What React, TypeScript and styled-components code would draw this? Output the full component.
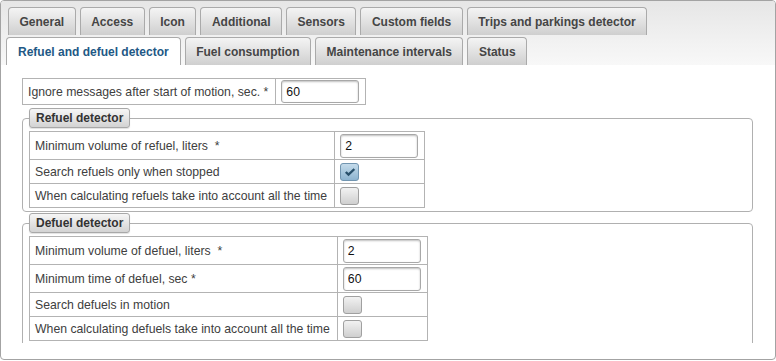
import React, { ReactElement } from "react";
import styled, { createGlobalStyle, css } from "styled-components";

const GlobalStyle = createGlobalStyle`
  html, body {
    margin: 0;
    padding: 0;
    background: #fff;
  }
  body {
    font-family: "Liberation Sans", Arial, sans-serif;
  }
`;

const Panel = styled.div`
  width: 776px;
  height: 360px;
  box-sizing: border-box;
  border: 1px solid #a3a3a3;
  border-radius: 4px;
  overflow: hidden;
  display: flex;
  flex-direction: column;
  background: #fff;
`;

const Header = styled.div`
  height: 64px;
  flex-shrink: 0;
  background: linear-gradient(to bottom, #e6e6e6, #f8f8f8);
  display: flex;
  flex-direction: column;
  padding-top: 6px;
  box-sizing: border-box;
`;

const TabRow = styled.div<{ $left: number; $gap: number }>`
  display: flex;
  align-items: flex-end;
  gap: ${(p) => p.$gap}px;
  padding-left: ${(p) => p.$left}px;
  height: 28px;
  & + & {
    margin-top: 2px;
  }
`;

const Tab = styled.div<{ $active?: boolean }>`
  height: 28px;
  box-sizing: border-box;
  padding: 0 10.5px;
  display: flex;
  align-items: center;
  font-size: 12px;
  font-weight: bold;
  color: #454545;
  white-space: nowrap;
  border: 1px solid #aaaaaa;
  border-bottom: none;
  border-radius: 4px 4px 0 0;
  background: linear-gradient(to bottom, #f4f4f4, #cfcfcf);
  ${(p) =>
    p.$active &&
    css`
      background: #fff;
      color: #225885;
      padding: 0 11px;
    `}
`;

const ScrollArea = styled.div`
  height: 278px;
  flex-shrink: 0;
  overflow: hidden;
  padding: 13px 22px 0 21px;
  box-sizing: border-box;
`;

const FormTable = styled.table`
  border-collapse: collapse;
  border: 1px solid #b3b3b3;
  font-size: 12.25px;
  color: #404040;
`;

const Row = styled.tr<{ $h: number }>`
  height: ${(p) => p.$h}px;
`;

const LabelCell = styled.td`
  border: 1px solid #b3b3b3;
  padding: 0 7px 0 5px;
  white-space: nowrap;
  vertical-align: middle;
`;

const ValueCell = styled.td`
  border: 1px solid #b3b3b3;
  padding: 0 6px 0 5px;
  vertical-align: middle;
`;

const TextInput = styled.input<{ $h: number }>`
  display: block;
  width: 78px;
  height: ${(p) => p.$h}px;
  box-sizing: border-box;
  border: 1px solid #a8a8a8;
  border-radius: 3px;
  box-shadow: inset 0 1px 2px rgba(0, 0, 0, 0.25);
  padding: 0 4px;
  font-family: "Liberation Sans", Arial, sans-serif;
  font-size: 12.25px;
  color: #111;
  background: #fff;
  outline: none;
`;

const Box = styled.div<{ $checked?: boolean }>`
  width: 19px;
  height: 18px;
  box-sizing: border-box;
  border: 1px solid #a0a0a0;
  border-radius: 3px;
  background: linear-gradient(to bottom, #f2f2f2, #cfcfcf);
  display: flex;
  align-items: center;
  justify-content: center;
  ${(p) =>
    p.$checked &&
    css`
      border-color: #7195b0;
      background: linear-gradient(to bottom, #c4dbeb, #8db4d0);
    `}
`;

const Fieldset = styled.fieldset<{ $bottom: number; $top: number }>`
  margin: ${(p) => p.$top}px 0 0 0;
  padding: 3px 6px ${(p) => p.$bottom}px 6px;
  border: 1px solid #b0b0b0;
  border-radius: 4px;
  min-width: 0;
`;

const Legend = styled.legend`
  height: 20px;
  box-sizing: border-box;
  padding: 0 6px;
  line-height: 18px;
  font-size: 12px;
  font-weight: bold;
  color: #333;
  border: 1px solid #a8a8a8;
  border-radius: 3px;
  background: linear-gradient(to bottom, #f6f6f6, #d3d3d3);
  box-shadow: 0 1px 1px rgba(0, 0, 0, 0.12);
`;

function Check({ checked }: { checked?: boolean }): ReactElement {
  return (
    <Box $checked={checked}>
      {checked && (
        <svg width="12" height="10" viewBox="0 0 12 10">
          <path
            d="M1.8 5 L4.5 7.6 L10.4 2"
            fill="none"
            stroke="#29506b"
            strokeWidth="2.4"
          />
        </svg>
      )}
    </Box>
  );
}

type Field =
  | { label: string; value: string }
  | { label: string; checked: boolean };

function Fields({ rows }: { rows: Field[] }): ReactElement {
  return (
    <FormTable>
      <tbody>
        {rows.map((r) => (
          <Row key={r.label} $h={"value" in r ? 28 : 24}>
            <LabelCell>{r.label}</LabelCell>
            <ValueCell>
              {"value" in r ? (
                <TextInput $h={24} defaultValue={r.value} />
              ) : (
                <Check checked={r.checked} />
              )}
            </ValueCell>
          </Row>
        ))}
      </tbody>
    </FormTable>
  );
}

const topTabs = [
  "General",
  "Access",
  "Icon",
  "Additional",
  "Sensors",
  "Custom fields",
  "Trips and parkings detector",
];
const bottomTabs = [
  "Refuel and defuel detector",
  "Fuel consumption",
  "Maintenance intervals",
  "Status",
];

const refuel: Field[] = [
  { label: "Minimum volume of refuel, liters\u00a0 *", value: "2" },
  { label: "Search refuels only when stopped", checked: true },
  { label: "When calculating refuels take into account all the time", checked: false },
];

const defuel: Field[] = [
  { label: "Minimum volume of defuel, liters\u00a0 *", value: "2" },
  { label: "Minimum time of defuel, sec *", value: "60" },
  { label: "Search defuels in motion", checked: false },
  { label: "When calculating defuels take into account all the time", checked: false },
];

export default function App(): ReactElement {
  return (
    <>
      <GlobalStyle />
      <Panel>
        <Header>
          <TabRow $left={7} $gap={4}>
            {topTabs.map((t) => (
              <Tab key={t}>{t}</Tab>
            ))}
          </TabRow>
          <TabRow $left={5} $gap={4}>
            {bottomTabs.map((t, i) => (
              <Tab key={t} $active={i === 0}>
                {t}
              </Tab>
            ))}
          </TabRow>
        </Header>
        <ScrollArea>
          <FormTable>
            <tbody>
              <Row $h={26}>
                <LabelCell>Ignore messages after start of motion, sec. *</LabelCell>
                <ValueCell>
                  <TextInput $h={23} defaultValue="60" />
                </ValueCell>
              </Row>
            </tbody>
          </FormTable>
          <Fieldset $top={3} $bottom={3}>
            <Legend>Refuel detector</Legend>
            <Fields rows={refuel} />
          </Fieldset>
          <Fieldset $top={1} $bottom={20}>
            <Legend>Defuel detector</Legend>
            <Fields rows={defuel} />
          </Fieldset>
        </ScrollArea>
      </Panel>
    </>
  );
}
